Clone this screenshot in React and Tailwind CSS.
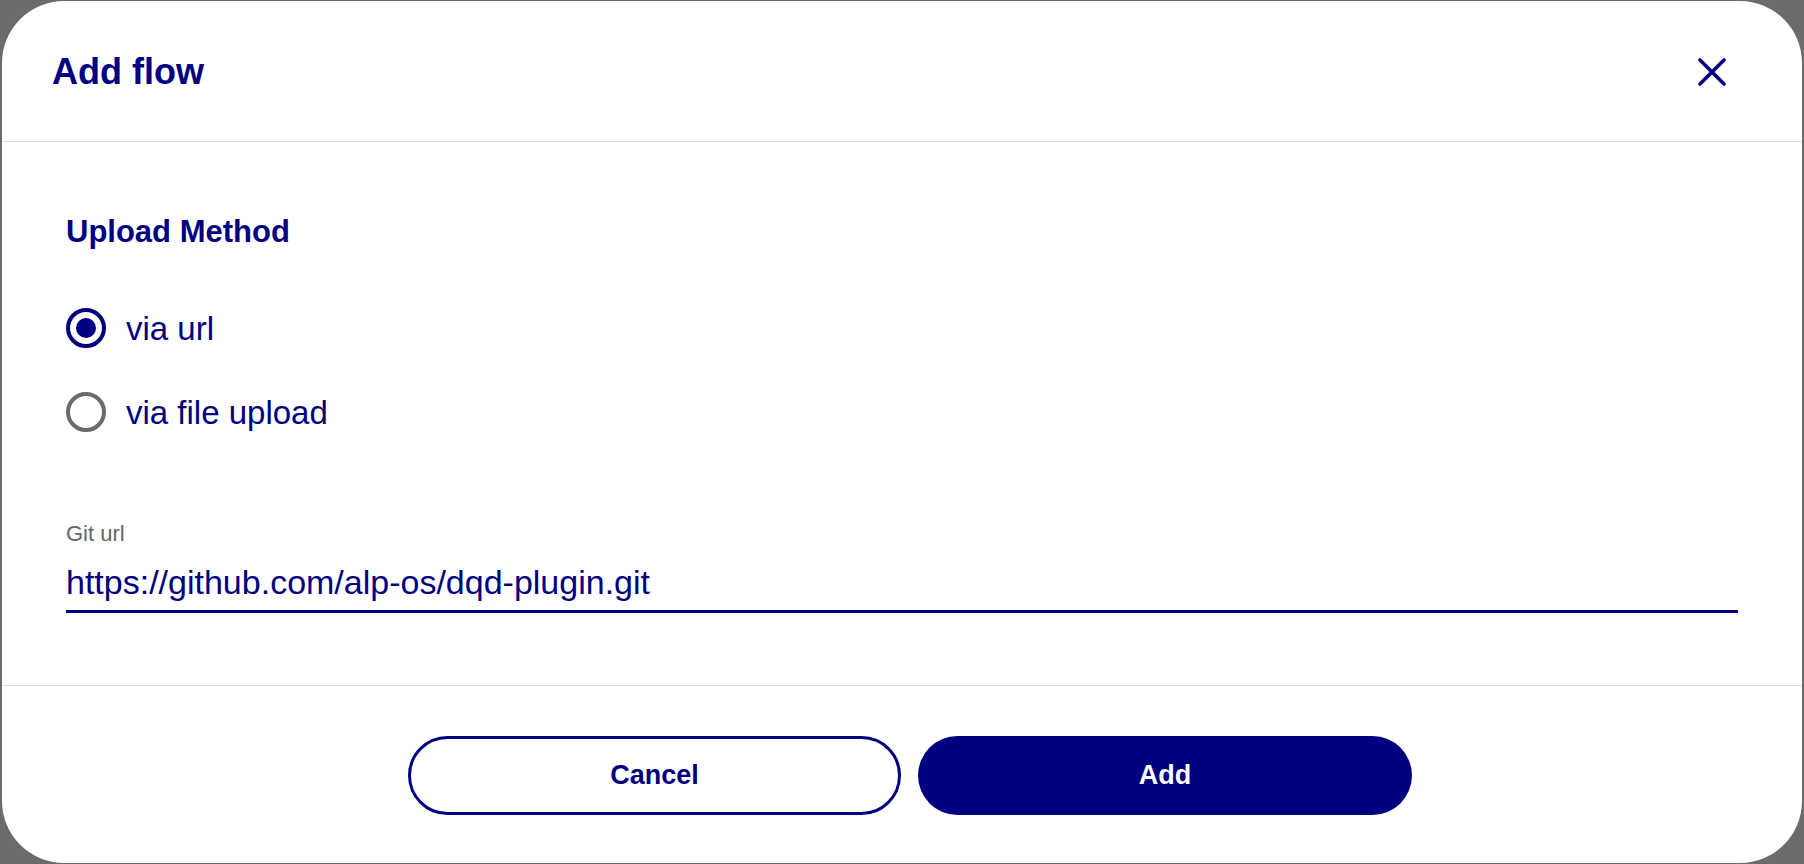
import React from "react";

function Radio({ checked, label }) {
  return (
    <label className="flex h-[40px] items-center gap-[20px]">
      <span
        className={
          checked
            ? "flex h-[40px] w-[40px] items-center justify-center rounded-full border-[4px] border-[#000080]"
            : "flex h-[40px] w-[40px] items-center justify-center rounded-full border-[4px] border-[#6b6b6b]"
        }
      >
        {checked && <span className="h-[20px] w-[20px] rounded-full bg-[#000080]" />}
      </span>
      <span className="pt-[2px] text-[33px] leading-[40px] text-[#000080]">{label}</span>
    </label>
  );
}

export default function App() {
  return (
    <div
      className="h-[864px] w-[1804px] bg-[#6b6b6b] px-[2px] py-[1px]"
      style={{ fontFamily: '"Liberation Sans", Arial, sans-serif' }}
    >
      <div className="flex h-full w-full flex-col rounded-[62px] bg-white">
        <div className="flex h-[141px] items-center justify-between border-b border-[#dedede] pl-[50px] pr-[76px] pt-[2px]">
          <h1 className="text-[36px] font-bold leading-[44px] text-[#000080]">Add flow</h1>
          <button className="flex h-[28px] w-[28px] items-center justify-center" aria-label="Close">
            <svg width="28" height="28" viewBox="0 0 28 28" fill="none">
              <path d="M2 2 L26 26 M26 2 L2 26" stroke="#000080" strokeWidth="3.6" strokeLinecap="round" />
            </svg>
          </button>
        </div>

        <div className="flex h-[544px] flex-col border-b border-[#dedede] px-[64px] pt-[71px]">
          <h2 className="text-[31px] font-bold leading-[38px] text-[#000080]">Upload Method</h2>
          <div className="mt-[57px] flex flex-col gap-[44px]">
            <Radio checked label="via url" />
            <Radio label="via file upload" />
          </div>
          <div className="mt-[88px] text-[22px] leading-[28px] text-[#666666]">Git url</div>
          <div className="mt-[14px] border-b-[3px] border-[#000080] pb-[8px] text-[34px] leading-[40px] text-[#000080]">
            https://github.com/alp-os/dqd-plugin.git
          </div>
        </div>

        <div className="flex flex-1 items-center justify-center gap-[17px] pl-[16px] pt-[2px]">
          <button className="flex h-[79px] w-[493px] items-center justify-center rounded-full border-[3px] border-[#000080] bg-white text-[27px] font-bold text-[#000080]">
            Cancel
          </button>
          <button className="flex h-[79px] w-[494px] items-center justify-center rounded-full bg-[#000080] text-[27px] font-bold text-white">
            Add
          </button>
        </div>
      </div>
    </div>
  );
}
